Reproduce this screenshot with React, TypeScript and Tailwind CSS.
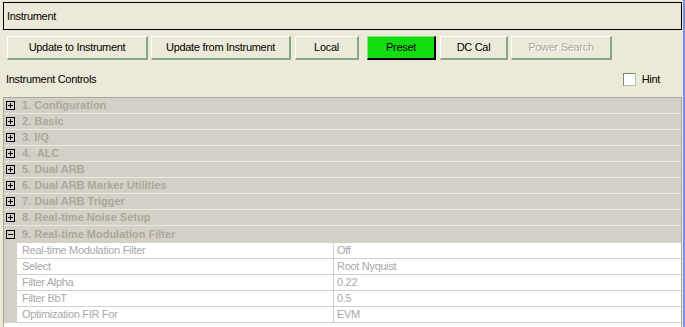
import React from "react";

const sections = [
  "1. Configuration",
  "2. Basic",
  "3. I/Q",
  "4.  ALC",
  "5. Dual ARB",
  "6. Dual ARB Marker Utilities",
  "7. Dual ARB Trigger",
  "8. Real-time Noise Setup",
];

const props: [string, string][] = [
  ["Real-time Modulation Filter", "Off"],
  ["Select", "Root Nyquist"],
  ["Filter Alpha", "0.22"],
  ["Filter BbT", "0.5"],
  ["Optimization FIR For", "EVM"],
];

function TreeBox({ open }: { open: boolean }) {
  return (
    <svg width="9" height="9" viewBox="0 0 9 9" shapeRendering="crispEdges" className="shrink-0">
      <rect x="0.5" y="0.5" width="8" height="8" fill="none" stroke="#000" />
      <line x1="2" y1="4.5" x2="7" y2="4.5" stroke="#000" />
      {!open && <line x1="4.5" y1="2" x2="4.5" y2="7" stroke="#000" />}
    </svg>
  );
}

function XpButton({ label, width, ml, kind }: { label: string; width: number; ml: number; kind?: "on" | "off" }) {
  const base = "h-[24px] flex items-center justify-center border-t border-l";
  if (kind === "on") {
    return (
      <div style={{ width, marginLeft: ml }} className={`${base} bg-[#11dd11] border-t-[#7fe87f] border-l-[#7fe87f] border-b-2 border-r-2 border-b-black border-r-black text-black`}>
        {label}
      </div>
    );
  }
  if (kind === "off") {
    return (
      <div style={{ width, marginLeft: ml }} className={`${base} bg-[#ece9d8] border-white border-b-2 border-r-2 border-b-[#86a886] border-r-[#86a886] text-[#aca899] [text-shadow:1px_1px_0_#fff]`}>
        {label}
      </div>
    );
  }
  return (
    <div style={{ width, marginLeft: ml }} className={`${base} bg-[#ece9d8] border-white border-b-2 border-r-2 border-b-[#86a886] border-r-[#86a886] text-black`}>
      {label}
    </div>
  );
}

export default function App() {
  return (
    <div className="w-[685px] h-[327px] overflow-hidden bg-[#ece9d8] border-r-2 border-[#7b8fe2] font-['Liberation_Sans',Arial,sans-serif] text-[11px] tracking-[-0.3px] text-black">
      <div className="pl-[3px] pr-[1px] pt-[2px]">
        <div className="h-[28px] border border-black flex items-center pl-[3px]">Instrument</div>

        <div className="mt-[6px] flex">
          <XpButton label="Update to Instrument" width={141} ml={4} />
          <XpButton label="Update from Instrument" width={140} ml={3} />
          <XpButton label="Local" width={64} ml={4} />
          <XpButton label="Preset" width={69} ml={8} kind="on" />
          <XpButton label="DC Cal" width={68} ml={4} />
          <XpButton label="Power Search" width={101} ml={3} kind="off" />
        </div>

        <div className="pt-[13px] pb-[11px] pl-[3px] pr-[22px] flex items-center justify-between h-[37px]">
          <span>Instrument Controls</span>
          <label className="flex items-center gap-[6px]">
            <span className="w-[13px] h-[13px] bg-white border border-t-[#6f946f] border-l-[#6f946f] border-b-[#a9c4a9] border-r-[#a9c4a9]" />
            <span>Hint</span>
          </label>
        </div>

        <div className="h-[240px] bg-white border-t border-l border-r border-[#aca899]">
          {sections.map((s) => (
            <div key={s} className="h-[16px] bg-[#d4d0c8] border-b border-[#ece9d8] flex items-center pl-[2px]">
              <TreeBox open={false} />
              <span className="ml-[7px] font-bold tracking-normal text-[#aca899] whitespace-pre">{s}</span>
            </div>
          ))}
          <div className="h-[16px] bg-[#d4d0c8] flex items-center pl-[2px]">
            <TreeBox open={true} />
            <span className="ml-[7px] font-bold tracking-normal text-[#aca899]">9. Real-time Modulation Filter</span>
          </div>
          {props.map(([k, v]) => (
            <div key={k} className="h-[16px] flex">
              <div className="w-[13px] bg-[#d4d0c8]" />
              <div className="w-[317px] border-t border-r border-[#d4d0c8] pl-[5px] flex items-center text-[#a8a8a8]">{k}</div>
              <div className="flex-1 border-t border-[#d4d0c8] pl-[3px] flex items-center text-[#a8a8a8]">{v}</div>
            </div>
          ))}
          <div className="flex h-[1px]">
            <div className="w-[13px] bg-[#d4d0c8]" />
            <div className="flex-1 bg-[#d4d0c8]" />
          </div>
        </div>
      </div>
    </div>
  );
}
